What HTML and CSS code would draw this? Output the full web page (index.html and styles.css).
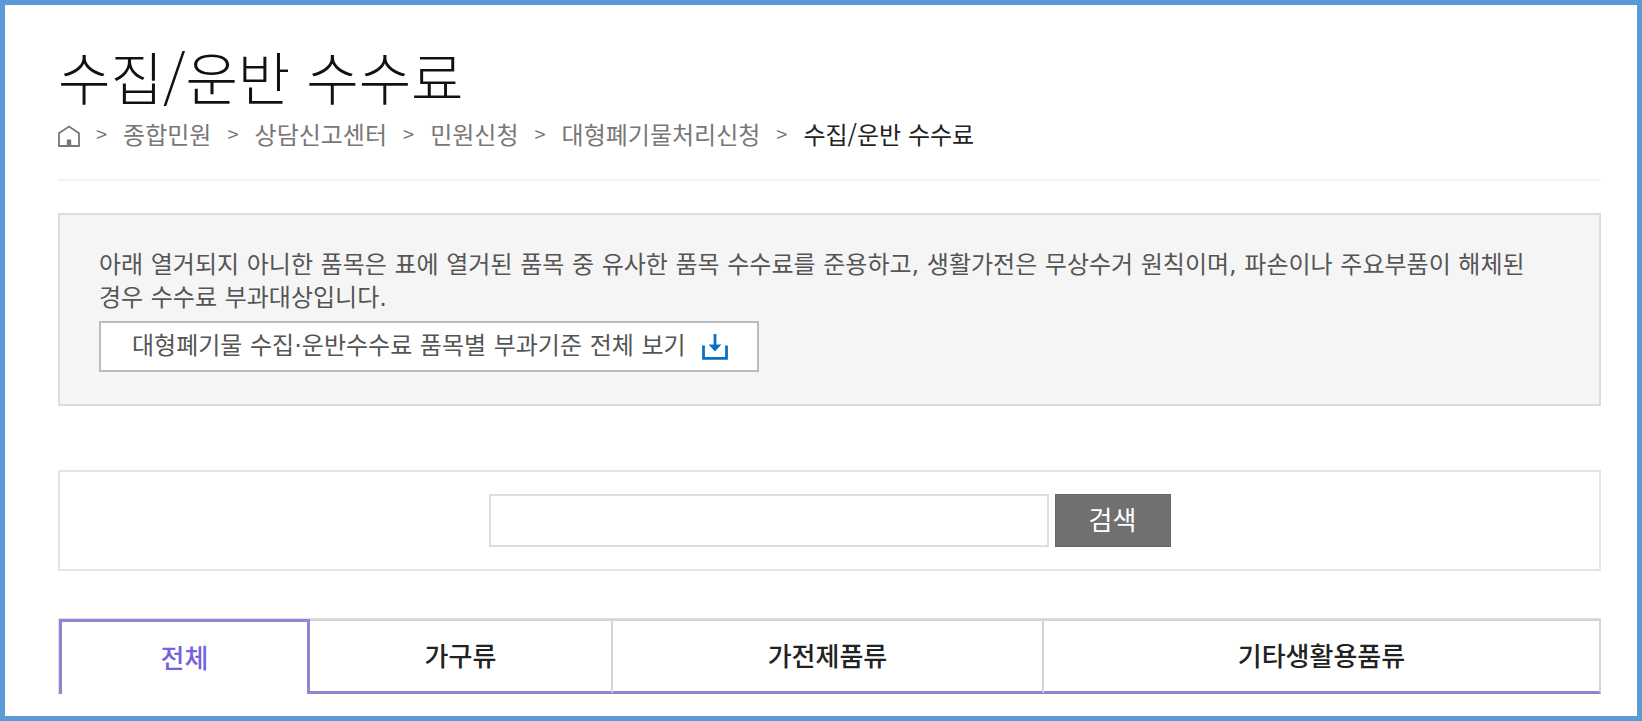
FILE: index.html
```html
<!DOCTYPE html>
<html lang="ko">
<head>
<meta charset="utf-8">
<title>수집/운반 수수료</title>
<link rel="stylesheet" href="styles.css">
</head>
<body>
<div class="frame">
  <header class="page-head">
    <h1 class="title">수집/운반 수수료</h1>
    <nav class="breadcrumb" aria-label="현재 위치">
      <a class="home" href="#" aria-label="홈">
        <svg class="home-icon" viewBox="0 0 22 22" aria-hidden="true"><path d="M1 21V8.200L11 1.500l10 6.700V21z" fill="none" stroke="#777" stroke-width="1.800"/><path d="M8.800 14.500h4.400V21H8.800z" fill="#777"/></svg>
      </a>
      <span class="sep">&gt;</span>
      <a href="#">종합민원</a>
      <span class="sep">&gt;</span>
      <a href="#">상담신고센터</a>
      <span class="sep">&gt;</span>
      <a href="#">민원신청</a>
      <span class="sep">&gt;</span>
      <a href="#">대형폐기물처리신청</a>
      <span class="sep">&gt;</span>
      <a class="current" href="#" aria-current="page">수집/운반 수수료</a>
    </nav>
  </header>

  <main>
    <section class="notice">
      <p class="notice-text">아래 열거되지 아니한 품목은 표에 열거된 품목 중 유사한 품목 수수료를 준용하고, 생활가전은 무상수거 원칙이며, 파손이나 주요부품이 해체된 경우 수수료 부과대상입니다.</p>
      <a class="download" href="#">대형폐기물 수집·운반수수료 품목별 부과기준 전체 보기
        <svg class="download-icon" viewBox="0 0 26 26" aria-hidden="true"><path d="M1.500 11.500v12.900h23V11.500" fill="none" stroke="#0b6fc7" stroke-width="2.800"/><path d="M11.600 0h2.800v10.500h5L13 17.500l-6.400-7h5z" fill="#0b6fc7"/></svg>
      </a>
    </section>

    <form class="search">
      <input class="search-input" type="text" aria-label="품목 검색">
      <button class="search-button" type="button">검색</button>
    </form>

    <div class="tabs" role="tablist">
      <button class="tab active" type="button" role="tab" aria-selected="true">전체</button>
      <button class="tab" type="button" role="tab" aria-selected="false">가구류</button>
      <button class="tab" type="button" role="tab" aria-selected="false">가전제품류</button>
      <button class="tab" type="button" role="tab" aria-selected="false">기타생활용품류</button>
    </div>
  </main>
</div>
</body>
</html>
```
FILE: styles.css
```css
* {
  box-sizing: border-box;
}

body {
  margin: 0;
  background: #fff;
  color: #555;
  font-family: "Noto Sans CJK KR", sans-serif;
}

a {
  color: inherit;
  text-decoration: none;
}

.frame {
  min-height: 100vh;
  padding: 34px 36px 20px 53px;
  border: 5px solid #5b9bd5;
}

.page-head {
  padding-bottom: 28px;
  border-bottom: 2px solid #f2f2f2;
}

.title {
  margin: 0 0 6px;
  color: #111;
  font-size: 57px;
  font-weight: 300;
  line-height: 72px;
}

.breadcrumb {
  display: flex;
  align-items: center;
  gap: 16px;
  color: #777;
  font-size: 24px;
  line-height: 34px;
}

.home-icon {
  display: block;
  width: 22px;
  height: 22px;
  margin-top: 3px;
}

.sep {
  font-size: 20px;
}

.current {
  color: #222;
}

.notice {
  margin-top: 32px;
  padding: 34px 39px 32px;
  border: 2px solid #dcdcdc;
  background: #f5f5f5;
  font-family: "DejaVu Sans", "Noto Sans CJK KR", sans-serif;
  font-size: 24px;
  font-weight: 400;
  word-break: keep-all;
}

.notice-text {
  margin: 0 0 6px;
  line-height: 33px;
}

.download {
  display: flex;
  align-items: center;
  gap: 16px;
  width: fit-content;
  padding: 0 29px 0 31px;
  border: 2px solid #bbb;
  background: #fff;
  line-height: 47px;
}

.download-icon {
  width: 26px;
  height: 26px;
}

.search {
  display: flex;
  justify-content: center;
  gap: 6px;
  margin-top: 64px;
  padding: 22px 40px;
  border: 2px solid #e5e5e5;
}

.search-input {
  flex: 0 1 560px;
  min-width: 0;
  height: 53px;
  padding: 0 12px;
  border: 2px solid #dedede;
  font: inherit;
  font-size: 24px;
}

.search-button {
  width: 116px;
  padding: 0 0 4px;
  border: 1px solid #666;
  background: #707070;
  color: #fff;
  font: inherit;
  font-size: 26px;
}

.tabs {
  display: grid;
  grid-template-columns: 251fr 303fr 431fr 557fr;
  margin-top: 47px;
  border: solid #dedede;
  border-width: 1px 0 0 1px;
}

.tab {
  height: 75px;
  padding: 0 0 4px;
  border: solid #d5d5d5;
  border-width: 2px 2px 3px 0;
  border-bottom-color: #8f86d3;
  background: #fff;
  color: #222;
  font: inherit;
  font-size: 26px;
  font-weight: 500;
}

.tab.active {
  border: 3px solid #8f86d3;
  border-bottom: 0;
  color: #7562e0;
}
```
